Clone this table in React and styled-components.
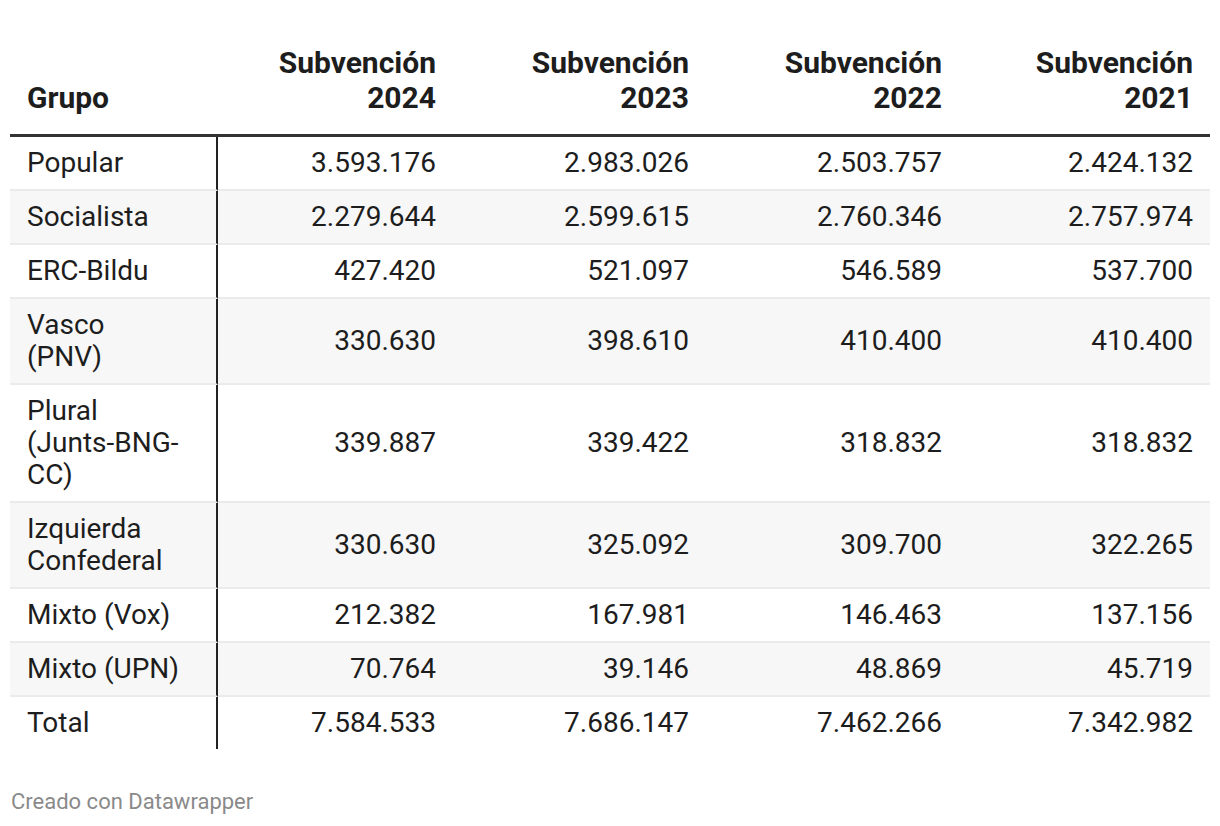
import React from 'react';
import styled, { createGlobalStyle } from 'styled-components';

const GlobalStyle = createGlobalStyle`
    * { box-sizing: border-box; }
    body {
        margin: 0;
        background: #ffffff;
        font-family: Roboto, "Liberation Sans", Arial, sans-serif;
        color: #1d1d1d;
    }
`;

const columns = ['2024', '2023', '2022', '2021'];
const widths = [208, 235, 253, 253, 251];

const rows = [
    { name: ['Popular'], values: ['3.593.176', '2.983.026', '2.503.757', '2.424.132'] },
    { name: ['Socialista'], values: ['2.279.644', '2.599.615', '2.760.346', '2.757.974'] },
    { name: ['ERC-Bildu'], values: ['427.420', '521.097', '546.589', '537.700'] },
    { name: ['Vasco', '(PNV)'], values: ['330.630', '398.610', '410.400', '410.400'] },
    { name: ['Plural', '(Junts-BNG-', 'CC)'], values: ['339.887', '339.422', '318.832', '318.832'] },
    { name: ['Izquierda', 'Confederal'], values: ['330.630', '325.092', '309.700', '322.265'] },
    { name: ['Mixto (Vox)'], values: ['212.382', '167.981', '146.463', '137.156'] },
    { name: ['Mixto (UPN)'], values: ['70.764', '39.146', '48.869', '45.719'] },
    { name: ['Total'], values: ['7.584.533', '7.686.147', '7.462.266', '7.342.982'] },
];

function App() {
    return (
        <Page>
            <GlobalStyle />
            <Table>
                <colgroup>
                    {widths.map((w, i) => (
                        <col key={i} style={{ width: w }} />
                    ))}
                </colgroup>
                <thead>
                    <tr>
                        <HeadCell $first>Grupo</HeadCell>
                        {columns.map(year => (
                            <HeadCell key={year}>
                                Subvención
                                <br />
                                {year}
                            </HeadCell>
                        ))}
                    </tr>
                </thead>
                <tbody>
                    {rows.map((row, i) => (
                        <Row key={i} $striped={i % 2 === 1} $last={i === rows.length - 1}>
                            <NameCell>
                                {row.name.map((line, j) => (
                                    <React.Fragment key={j}>
                                        {j > 0 && <br />}
                                        {line}
                                    </React.Fragment>
                                ))}
                            </NameCell>
                            {row.values.map((v, j) => (
                                <ValueCell key={j}>{v}</ValueCell>
                            ))}
                        </Row>
                    ))}
                </tbody>
            </Table>
            <Footer>Creado con Datawrapper</Footer>
        </Page>
    );
}

const Page = styled.div`
    width: 1220px;
    padding: 37px 10px 0 10px;
`;

const Table = styled.table`
    width: 1200px;
    table-layout: fixed;
    border-collapse: separate;
    border-spacing: 0;
    font-size: 28px;
`;

const HeadCell = styled.th`
    font-size: 30px;
    font-weight: 700;
    line-height: 35px;
    text-align: ${p => (p.$first ? 'left' : 'right')};
    vertical-align: bottom;
    padding: 8px 17px 19px 17px;
    color: #1d1d1d;
    border-bottom: 3px solid #333333;
`;

const Row = styled.tr`
    background: ${p => (p.$striped ? '#f7f7f7' : '#ffffff')};
    td {
        border-bottom: ${p => (p.$last ? 'none' : '2px solid #ebebeb')};
    }
`;

const NameCell = styled.td`
    line-height: 32px;
    padding: 10px 17px 10px 17px;
    text-align: left;
    vertical-align: middle;
    border-right: 2px solid #222222;
    white-space: nowrap;
`;

const ValueCell = styled.td`
    line-height: 32px;
    padding: 10px 17px 10px 17px;
    text-align: right;
    vertical-align: middle;
`;

const Footer = styled.div`
    margin-top: 40px;
    padding-left: 1px;
    font-size: 22px;
    line-height: 26px;
    color: #8a8a8a;
`;

export default App;
